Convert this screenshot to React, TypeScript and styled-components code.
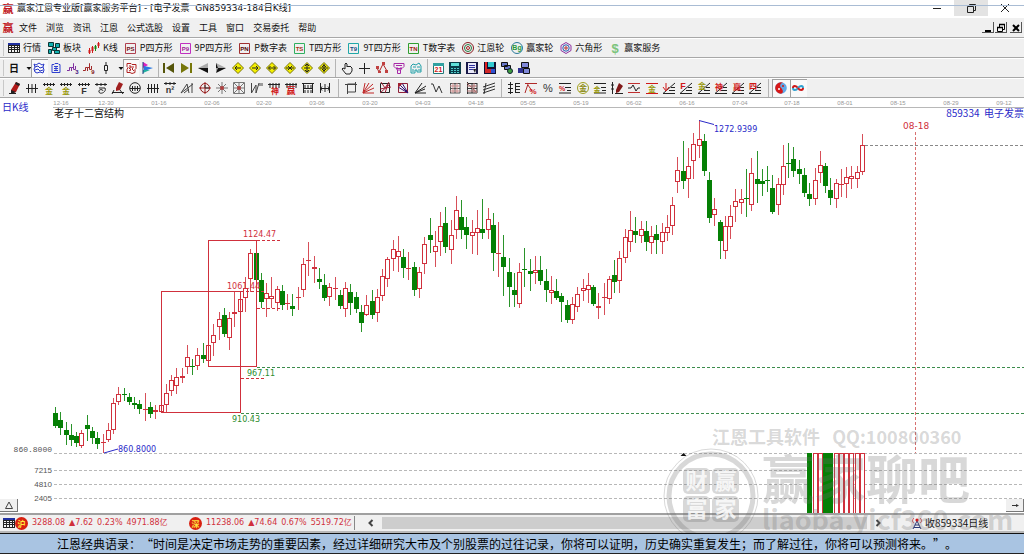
import React from 'react';
import styled, { createGlobalStyle, css } from 'styled-components';

const CJK = '"Noto Sans CJK SC", sans-serif';
const NUM = '"DejaVu Sans", "Noto Sans CJK SC", sans-serif';
const RED = '#d0303c';
const GREEN = '#058005';
const BLUE = '#2a2ac8';

const GlobalStyle = createGlobalStyle`
  * { box-sizing: border-box; }
  body { margin: 0; background: #fff; font-family: ${CJK}; font-size: 9px; color: #111; }
  button { margin: 0; padding: 0; border: 0; background: none; font: inherit; color: inherit; }
`;

/* ---------- icons ---------- */

type Shape = { d: string; s?: string; f?: string; w?: number };
type Label = { t: string; x?: number; y?: number; c: string; size?: number; bold?: boolean };
type IconSpec = { shapes?: Shape[]; labels?: Label[] };

const K = '#222';
const R = '#d01818';
const s = (d: string, c = K, w = 1): Shape => ({ d, s: c, w });
const f = (d: string, c = K): Shape => ({ d, f: c });
const t = (text: string, c: string, x = 6, y = 10, size = 8, bold = true): Label => ({ t: text, c, x, y, size, bold });

const badge = (text: string, frame: string, ink: string): IconSpec => ({
  shapes: [s('M0.500 1.500h10v10h-10z', frame)],
  labels: [t(text, ink, 5.5, 9, 6)],
});
const diamond = (marks: string): IconSpec => ({
  shapes: [{ d: 'M6 0.500l5.500 5.500-5.500 5.500-5.500-5.500z', f: '#f4f000', s: '#77720a', w: 1 }, s(marks, K, 1)],
});
const ringPath = (r: number, cx = 6, cy = 6) => `M${cx - r} ${cy}a${r} ${r} 0 1 0 ${2 * r} 0a${r} ${r} 0 1 0 ${-2 * r} 0`;
const fan = 'M0 11.500h12M0 11.500L12 1M6 8.500h6M8 5.500h4';

const ICONS: Record<string, IconSpec> = {
  seal: { labels: [t('赢', '#c01420', 6, 10, 11)] },
  quotes: { shapes: [f('M0 1h12v10H0z', '#222'), f('M0 1h12v2H0z', '#2030a0'), f('M1 4h2v1H1zM4 4h2v1H4zM7 4h2v1H7zM10 4h1v1h-1zM1 6h2v1H1zM4 6h2v1H4zM7 6h2v1H7zM10 6h1v1h-1zM1 8h2v2H1zM4 8h2v2H4zM7 8h2v2H7zM10 8h1v2h-1z', '#f4f4f4')] },
  blocks: { shapes: [{ d: 'M0.5 0.5h5v4h-5zM7.500 1.500h4v4h-4zM4.500 5.500h4v3h-4zM0.500 7.500h3v4h-3zM6.500 8.500h5v3h-5z', f: '#10b0b0', s: '#0b3434' }] },
  kline: { shapes: [s('M1.500 6v6M4.500 4v7', R), s('M7.500 3v6', '#118811'), s('M10.500 0v6', R), f('M0.500 8h2v3h-2zM3.500 5h2v4h-2zM9.500 1h2v3h-2z', R), f('M6.500 4h2v3h-2z', '#118811')] },
  p8: badge('PS', '#b04050', '#701018'),
  p9: badge('P9', '#c030c0', '#a01898'),
  pn: badge('PN', '#a03030', '#500808'),
  t8: badge('TS', '#30b060', '#a83018'),
  t9: badge('T9', '#20a8a8', '#184880'),
  tn: badge('TN', '#30a030', '#a02010'),
  wheel: { shapes: [s(ringPath(5.5), '#8a1c22', 1), s(ringPath(3.5), '#207840', 1), s(ringPath(1.5), '#a02020', 1)] },
  wheel2: { shapes: [s(ringPath(5.5), '#2a7a9a', 1)], labels: [t('Bg', '#2a9a3a', 6, 8, 7)] },
  hexa: { shapes: [s('M6 0.500l5 3v5l-5 3-5-3v-5z', '#9030a0'), s(ringPath(3.2), '#2858b0'), s(ringPath(1.2), '#b02020')] },
  dollar: { labels: [t('$', '#7cc47c', 6, 11, 13)] },
  net: { shapes: [s('M1 2l2 1 3-2 3 2 2-1-1 3 1 3-1 3-3-1-3 1-2-1-1-3 1-2zM2 5l3-1 2 2 3-1M2 8l3-1 2 2 3-1', '#2838c8')] },
  scroll: { shapes: [s('M2 2.500h2l1-1h3l1 1h1v8H2zM4 4.500h4M4 6.500h4M6 4v4M4 8.500h4', '#3040d0')] },
  step3: { shapes: [s('M0 8.500h2.500V5.500h2V9M4.500 5.500h2V1.500v6h2V4', '#8030a0')], labels: [t('3', '#401080', 10, 12, 6)] },
  step9: { shapes: [s('M0 8.500h2.500V5.500h2V9M4.500 5.500h2V1.500v6h2V4', '#a02828')], labels: [t('9', '#801010', 10, 12, 6)] },
  candle: { shapes: [s('M6 0v3M6 9v3M4.500 3.500h3v5h-3z')] },
  redMaze: { shapes: [s('M2 1.500h4l1 1h4v4l-1 1v3l-3 1-2-1H2v-3l1-2-1-1zM4 4h2v2H4l2 2-2 1M8 4v2l-1 1 2 2', '#b02020', 1)] },
  flag: { shapes: [f('M1 0l5 3-5 3z', '#e020c0'), f('M2 4l9 2-9 3z', '#2878e0'), f('M1 8h7l-7 3z', '#20b0a0'), s('M1 0v12', '#204080')] },
  first: { shapes: [f('M0 1h2v10H0zM11 1v10L3 6z', '#55550a')] },
  last: { shapes: [f('M10 1h2v10h-2zM1 1v10l8-5z', '#77770a')] },
  prev: { shapes: [f('M11 1v9L1 6z', '#aaa'), f('M11 6v5L1 6z', '#111')] },
  next: { shapes: [f('M1 1v9l10-4z', '#aaa'), f('M1 6v5l10-5zM1 1l2 5-2 5z', '#111')] },
  dLeft: diamond('M3 6h6M5 4L3 6l2 2'),
  dRight: diamond('M3 6h6M7 4l2 2-2 2'),
  dBoth: diamond('M2.500 6h7M4.500 4l-2 2 2 2M7.500 4l2 2-2 2'),
  dIn: diamond('M2 6h8M4 4l2 2-2 2M8 4L6 6l2 2'),
  dUp: diamond('M6 2v8M4 4l2-2 2 2M3 6h6M4 8l2 2 2-2'),
  dDown: diamond('M6 2v8M4 5l2-2 2 2M4 7l2 2 2-2M2 6h8'),
  hand: { shapes: [s('M4 7V2l1-1 1 1v3l1-1 1 1 1-1 1 1 1 1v3l-2 3H5L1 7l1-1z')] },
  cross: { shapes: [s('M6.500 1v11M1 6.500h11')] },
  wave: { shapes: [s('M1 6l2 4 4-8 4 7', '#b02020'), f('M0 4h3v3H0zM6 0h3v3H6zM2 9h3v2H2zM9 8h3v3H9z', '#c04040')] },
  tree: { shapes: [s('M1 1.500h10v3l-2 2H3l-2-2zM4 5v3h4V5M4.500 8v3.500h3V8M3 3.500h6', '#a828a8')] },
  brain: { shapes: [s('M1 4l2-2 3 1 3-2 2 3v6H7V8H5v3H1V7zM3 5h3M7 5h3M3 7v3M8 8h3', '#20a0a8')] },
  cal: { shapes: [{ d: 'M1.500 2.500h10v9h-10z', f: '#fff', s: '#207878' }, f('M1 1h11v3H1z', '#30a0a0')], labels: [t('21', R, 6.5, 10, 7)] },
  calc: { shapes: [f('M0 0h12v12H0z', '#0a3c48'), f('M2 1h8v3H2z', '#60e0d8'), f('M2 6h2v1H2zM5 6h2v1H5zM8 6h2v1H8zM2 8h2v1H2zM5 8h2v1H5zM8 8h2v1H8zM2 10h2v1H2zM5 10h2v1H5zM8 10h2v1H8z', '#50c8c8')] },
  note: { shapes: [f('M0 0h12v12H0z', '#181848'), f('M2 1h8v10H2z', '#e8e8f8'), s('M3 3.500h6M3 5.500h6M3 7.500h4', '#3030a0'), f('M7 7h3l-1 4z', '#222')] },
  save: { shapes: [f('M0 0h12v12H0z', '#101030'), f('M1 0h2v7H1z', '#e02020'), f('M4 0h6v5H4z', '#30c8d0'), f('M1 7h6v4H1z', '#d02828'), f('M7 7h4v4H7z', '#3050d0')] },
  pcs: { shapes: [{ d: 'M0.500 0.500h6v4h-6zM3.500 3.500h6v4h-6z', f: '#6878c8', s: '#111' }, { d: ringPath(2.5, 9, 9), f: '#40a040', s: '#123' }] },
  pcs2: { shapes: [{ d: 'M3.500 0.500h7v5h-7zM5.500 6.500h6v5h-6z', f: '#8088d8', s: '#111' }, f('M0 6h5v5H0z', '#303090')] },
  pencil: { shapes: [f('M2 8L7 0l4 2-4 8-5 2z', '#b01818'), f('M2 8l5 2-5 2zM7 0l4 2-1 2-4-2z', '#222'), s('M0 11.500h7')] },
  ticks: { shapes: [s('M0 6.500h12M2.500 2v9M6 2v9M9.500 2v9')] },
  goldTicks: { shapes: [s('M0 2.500h12M1.500 1v3M4.500 1v3M7.500 1v3M10.500 1v3')], labels: [t('金', '#98980a', 6, 12, 8)] },
  fTicks: { shapes: [s('M0 2.500h12M1.500 1v3M4.500 1v3M7.500 1v3M10.500 1v3')], labels: [t('F', '#333', 6, 12, 9)] },
  curl: { shapes: [s('M0 2.500h12M2 1v3M6 1v3M10 1v3M4 6h6c2 4-5 7-6 4s4-3 4-1')] },
  pencil2: { shapes: [f('M4 6l3-6 4 2-3 6-4 1z', '#a02020'), s('M0 10.500h12M2 8l-2 4M8 8l3 4')] },
  ovalH: { shapes: [s(ringPath(5.3)), s('M1 6.500h10M3.500 4v5M6 4v5M8.500 4v5', K, 1)] },
  ticks4: { shapes: [s('M0 6.500h12M1.500 2v9M4.500 2v9M7.500 2v9M10.500 2v9')] },
  n2: { shapes: [s('M0 1.500h12M2 0v3M6 0v3M10 0v3')], labels: [t('n²', '#333', 6, 11, 9)] },
  angle: { shapes: [s('M0 11L6 2l2 9M0 11l12-9M11 1v10M3 11l5-4', '#444')] },
  redTarget: { shapes: [s(ringPath(4.5), '#901818'), s('M6 0v12M0 6h12', '#a02020'), s('M6 3v3h4', '#333')] },
  burst: { shapes: [s('M6 0v12M0 6h12M2 2l8 8M10 2l-8 8', '#777'), f(ringPath(2), '#b04040')] },
  burstBox: { shapes: [s('M0.500 0.500h11v11h-11zM6 0v12M0 6h12M1 1l10 10M11 1L1 11', '#777'), f(ringPath(2), '#b04040')] },
  vee: { shapes: [s('M1.500 1v10L6 3v8L9 1M10 1v3M12 1v3', '#444')] },
  ruler1: { shapes: [s('M0 2.500h12M2 1v5M5 1v5M8 1v5M11 1v5')], labels: [t('神', R, 7, 12, 8)] },
  ruler2: { shapes: [s('M0 2.500h12M2 1v5M5 1v5M8 1v5M11 1v5')], labels: [t('赢', R, 6, 12, 9)] },
  film: { shapes: [s('M0 1.500h12M1.500 1v10M10.500 1v10M1 6.500h10M3 3v3M6 3v3M9 3v3M3 8v3M6 8v3M9 8v3')] },
  span: { shapes: [s('M1.500 1v10M10.500 1v10M6 2v8M1 6.500h10M3 4.500L1.500 6.500 3 8.500M9 4.500l1.500 2-1.500 2')] },
  frame: { shapes: [s('M2.500 2v8h8V2zM0 2.500h12M2.500 10v2M10.500 0v2', '#444')] },
  redFan: { shapes: [s('M1 11L3 1M1 11L7 1M1 11l10-9M1 11l11-5M1 11h11', '#c02828')] },
  boxFan: { shapes: [s('M1.500 1.500h9v9h-9z', '#222'), s('M6 6L2 0M6 6l4-6M1 11L11 2M1 7l11-2M6 11l3-9', '#a02038')] },
  boxFan2: { shapes: [s('M1.500 1.500h9v9h-9z', '#902038'), s('M1 1l10 10M1 5l10 6M5 1l6 10', '#301070'), f('M1 1h5L1 6z', '#a02030')] },
  blackFan: { shapes: [s('M1 11L8 1M1 11l11-7M1 11h11M1 11l10-4')] },
  zig: { shapes: [s('M0 2h2l3 8 3-6 3 7', '#333')] },
  gridRed: { shapes: [s('M1 1.500h10M1 6.500h10M1 11h10M1.500 1v10M6 1v10M11 1v10', '#555'), s('M1 4h10M1 9h10M4 1v10M8 1v10', '#d09090')] },
  gridRed2: { shapes: [s('M1 1.500h10M1 6.500h10M1 11h10M1.500 0v12M6 1v10M11 1v10', '#333'), s('M1 4h10M1 9h10M1 1l10 10M8 1v10', '#b07070')] },
  channels: { shapes: [s('M0 5l12-4M0 8l12-4M0 11l12-4M3 1L1 12', '#333')] },
  ladder: { shapes: [s('M2.500 0v12M0 2.500h5M0 6.500h5M0 10.500h5', '#222'), s('M7 1.500h5M7 4.500h5M7 7.500h5M7 10.500h5M7.500 1v10', '#222')] },
  pctTop: { shapes: [s('M0 1.500h12M3 2L0 11M3 3l4 6', '#b02828')], labels: [t('%', R, 8, 12, 8)] },
  pct: { labels: [t('%', '#333', 6, 10, 11, false)] },
  pctLines: { shapes: [s('M0 1.500h12M6 5.500h6M0 11h12M8 8.500h4')], labels: [t('%', R, 3, 9, 7)] },
  goldRing: { shapes: [s(ringPath(5.500), '#a0a020')], labels: [t('金', '#8c8c10', 6, 9, 8)] },
  goldLines: { shapes: [s('M0 1.500h12M7 5.500h5M0 11h12M8 8.500h4')], labels: [t('金', '#98980a', 3, 10, 7)] },
  penRule: { shapes: [s('M1.500 0v12M0 3h3M0 7h3M4 11.500h8'), f('M5 8l3-7 4 3-4 6-3 1z', '#801818')] },
  band: { shapes: [s('M0 1.500h12M0 10.500h12', '#c03030'), s('M0 6h3l2-3 3 6 2-3h2')] },
  goldBand: { shapes: [s('M0 1.500h12M0 11.500h12', R)], labels: [t('金', '#98980a', 6, 10, 8)] },
  anchor: { shapes: [s(fan), s('M3 1v7M0 5l3 4 3-4', R)] },
  fanF: { shapes: [s(fan)], labels: [t('F', R, 3, 7, 9)] },
  fanGold: { shapes: [s(fan)], labels: [t('金', '#98980a', 4, 7, 8)] },
  fanShen: { shapes: [s(fan)], labels: [t('神', R, 4, 8, 8)] },
  fanYing: { shapes: [s(fan)], labels: [t('赢', R, 5, 8, 8)] },
  fanSi: { shapes: [s(fan)], labels: [t('四', R, 4, 7, 8)] },
  taiji: { shapes: [f(ringPath(5.800), '#60a8e8'), f('M6 0.200a5.800 5.800 0 0 0 0 11.600c3-1 2-4 0-6s0-5 2-5z', '#d81818'), f(ringPath(1, 8, 4), '#d81818'), f(ringPath(1, 4, 7), '#fff')] },
  infinity: { shapes: [s('M6 6C4 3 1 3.500 1 6', R, 2), s('M1 6c0 2.500 3 3 5 0', '#30a0d0', 2), s('M6 6c2-3 5-2.500 5 0', '#30a0d0', 2), s('M11 6c0 2.500-3 3-5 0', R, 2)] },
  antenna: { shapes: [s('M6 4L2 12M6 4l4 8M4 8h4M3 10.500h6', '#283878'), s('M3 1C1 3 1 5 3 6M9 1c2 2 2 4 0 5', '#d04040'), f(ringPath(1.600, 6, 3), R)] },
  min: { shapes: [s('M2 6.500h8')] },
  restore: { shapes: [s('M2.500 4.500h6v6h-6zM4.500 4V2.500h6v6H9')] },
  close: { shapes: [s('M2 2l8 8M10 2l-8 8')] },
  mdiMin: { shapes: [s('M3 9h6', '#000', 2)] },
  mdiRestore: { shapes: [s('M2.500 5.500h5v4h-5zM4.500 5V2.500h5v5H8', '#000'), s('M2 5.500h6M4 2.500h6', '#000', 1.5)] },
  mdiClose: { shapes: [s('M3 3l6 6M9 3l-6 6', '#000', 2)] },
  left: { shapes: [s('M7.500 3L4.500 6l3 3', '#444', 2)] },
  right: { shapes: [s('M4.500 3l3 3-3 3', '#444', 2)] },
  up: { shapes: [s('M6 3L2.500 9.500h7z', '#444')] },
  arrow: { shapes: [s('M3 6.500h6', '#333'), f('M7 5l3 1.500L7 8z', '#333')] },
  caret: { shapes: [f('M3.500 5h5L6 8z', '#111')] },
  day: { labels: [t('日', '#111', 6, 10, 10)] },
};

const IconSvg = styled.svg`
  display: block;
  flex: none;
  width: 12px;
  height: 12px;
  overflow: visible;
`;

const Icon = ({ name }: { name: string }) => (
  <IconSvg viewBox="0 0 12 12" aria-hidden="true">
    {ICONS[name].shapes?.map((p, i) => (
      <path key={i} d={p.d} fill={p.f ?? 'none'} stroke={p.s ?? 'none'} strokeWidth={p.w ?? 1} />
    ))}
    {ICONS[name].labels?.map((l, i) => (
      <text key={i} x={l.x} y={l.y} fill={l.c} fontSize={l.size} textAnchor="middle" fontWeight={l.bold ? 700 : 400} fontFamily={'"Liberation Sans", "Noto Sans CJK SC", sans-serif'}>
        {l.t}
      </text>
    ))}
  </IconSvg>
);

/* ---------- window frame ---------- */

const Window = styled.div`
  display: flex;
  flex-direction: column;
  min-height: 100vh;
  background: #fff;
`;

const TitleBar = styled.header`
  position: relative;
  display: flex;
  align-items: flex-start;
  height: 18px;
  padding: 0 2px;
  background: #fff;
  &::after {
    content: '';
    position: absolute;
    top: 5px;
    left: 0;
    right: 0;
    height: 1px;
    background: #a9bcd4;
  }
`;

const TitleIcon = styled.span`
  padding-top: 3px;
`;

const TitleText = styled.h1`
  flex: 1;
  margin: 0 0 0 3px;
  font: 400 9px/17px ${NUM};
  white-space: pre;
`;

const CaptionButton = styled.button<{ $on?: boolean }>`
  display: grid;
  place-items: center;
  width: 34px;
  height: 16px;
  background: ${(p) => (p.$on ? '#e3e3e3' : 'transparent')};
`;

const bar = css`
  display: flex;
  align-items: center;
  background: #f0f0f0;
  border-bottom: 1px solid #a8a8a8;
`;

const MenuBar = styled.nav`
  ${bar}
  height: 20px;
  gap: 5px;
  padding: 0 2px;
  line-height: 18px;
`;

const MenuItems = styled.div`
  display: flex;
  gap: 9px;
`;

const MdiButtons = styled.div`
  display: flex;
  gap: 1px;
  margin-left: auto;
`;

const MdiButton = styled.button`
  display: grid;
  place-items: center;
  width: 12px;
  height: 11px;
  background: #f0f0f0;
  border-right: 1px solid #555;
  border-bottom: 1px solid #555;
  &:last-child { margin-left: 2px; }
`;

const Toolbar = styled.div`
  ${bar}
  height: 20px;
  padding-left: 3px;
  border-top: 1px solid #fff;
`;

const Grip = styled.span`
  flex: none;
  width: 3px;
  height: 16px;
  border-left: 1px solid #c8c8c8;
`;

const Divider = styled.span<{ $w: number }>`
  flex: none;
  width: ${(p) => p.$w}px;
  height: 18px;
  background: linear-gradient(#b4b4b4, #b4b4b4) center / 1px 100% no-repeat;
`;

const NamedTool = styled.button`
  display: flex;
  align-items: center;
  gap: 3px;
  line-height: 18px;
  white-space: nowrap;
`;

const NamedTools = styled.div`
  display: flex;
  gap: 7px;
  padding-left: 2px;
`;

const ToolGroup = styled.div<{ $w: number }>`
  display: flex;
  flex: none;
  width: ${(p) => p.$w}px;
`;

const ToolButton = styled.button<{ $on?: boolean; $narrow?: boolean }>`
  display: grid;
  place-items: center;
  flex: ${(p) => (p.$narrow ? '0 0 8px' : '1 1 0')};
  min-width: 0;
  height: 18px;
  ${(p) =>
    p.$on &&
    css`
      background: #f9f9f9;
      box-shadow: inset 1px 1px 0 #a0a0a0;
    `}
`;

const Tools = ({ names, w, on = [] }: { names: string[]; w: number; on?: string[] }) => (
  <ToolGroup $w={w}>
    {names.map((n, i) => (
      <ToolButton key={i} type="button" aria-label={n} $on={on.includes(n)} $narrow={n === 'caret'}>
        <Icon name={n} />
      </ToolButton>
    ))}
  </ToolGroup>
);

const MENU = ['文件', '浏览', '资讯', '江恩', '公式选股', '设置', '工具', '窗口', '交易委托', '帮助'];

const NAMED: [string, string][] = [
  ['quotes', '行情'], ['blocks', '板块'], ['kline', 'K线'], ['p8', 'P四方形'], ['p9', '9P四方形'],
  ['pn', 'P数字表'], ['t8', 'T四方形'], ['t9', '9T四方形'], ['tn', 'T数字表'], ['wheel', '江恩轮'],
  ['wheel2', '赢家轮'], ['hexa', '六角形'], ['dollar', '赢家服务'],
];

const VIEW_A = ['day', 'caret', 'net', 'scroll', 'step3', 'step9', 'candle', 'caret', 'redMaze', 'flag'];
const VIEW_B = ['first', 'last', 'prev', 'next', 'dLeft', 'dRight', 'dBoth', 'dIn', 'dUp', 'dDown'];
const VIEW_C = ['hand', 'cross', 'wave', 'tree', 'brain'];
const VIEW_D = ['cal', 'calc', 'note', 'save', 'pcs', 'pcs2'];

const DRAW_A = ['pencil', 'ticks', 'goldTicks', 'goldTicks', 'fTicks', 'curl', 'pencil2', 'ovalH', 'ticks4', 'n2', 'angle', 'redTarget', 'burst', 'burstBox', 'vee', 'ruler1', 'ruler2', 'film', 'span'];
const DRAW_B = ['frame', 'redFan', 'boxFan', 'boxFan2', 'blackFan', 'zig', 'gridRed', 'gridRed2', 'channels'];
const DRAW_C = ['ladder', 'pctTop', 'pct', 'pctLines', 'goldRing', 'goldLines', 'penRule', 'band', 'goldBand', 'anchor', 'fanF', 'fanGold', 'fanShen', 'fanYing', 'fanSi'];

/* ---------- chart ---------- */

// Each candle: [high, body top, body bottom, low, rising]
type Candle = [number, number, number, number, 0 | 1];
const CANDLES: Candle[] = [
  [407,413,426,428,0],[412,420,428,435,0],[422,430,435,445,0],[424,435,440,446,0],[432,436,443,447,0],[430,433,446,448,1],
  [415,425,429,441,0],[427,431,438,444,0],[432,438,444,449,0],[434,442,443,453,1],[423,430,440,442,1],[398,403,430,434,1],
  [387,394,402,405,1],[388,394,394,401,0],[393,397,402,405,0],[397,403,405,409,0],[400,404,409,414,0],[393,409,409,421,1],
  [402,407,414,418,0],[405,410,412,419,1],[403,405,412,412,1],[384,393,405,412,1],[375,380,391,396,1],[368,377,386,394,1],
  [368,376,378,383,1],[345,357,367,374,1],[359,366,367,375,0],[348,355,366,370,1],[343,355,359,363,0],[344,345,361,365,1],
  [324,335,343,356,1],[312,319,327,340,1],[308,315,334,337,0],[312,318,338,350,1],[292,312,314,327,1],[292,299,312,312,1],
  [277,288,298,312,1],[249,253,279,292,1],[241,253,280,283,0],[273,280,302,308,0],[283,293,299,317,1],[277,296,299,308,1],
  [286,289,303,311,1],[285,291,305,310,0],[294,303,303,310,1],[294,306,309,316,0],[287,297,297,310,1],[258,264,290,297,1],
  [242,260,260,276,1],[256,267,269,283,1],[268,279,282,289,0],[274,285,298,301,0],[283,287,297,306,1],[277,288,288,300,1],
  [290,295,306,309,0],[282,288,309,317,1],[284,292,303,315,0],[292,297,309,313,0],[305,312,323,332,0],[295,305,315,316,1],
  [290,301,315,319,0],[289,297,313,322,1],[269,276,296,301,1],[257,259,279,287,1],[240,249,259,271,1],[236,251,257,272,1],
  [249,257,268,278,0],[252,268,268,280,1],[262,267,290,296,0],[267,272,289,298,1],[237,244,264,274,1],[218,235,240,253,0],
  [231,246,252,267,1],[212,226,242,256,1],[207,223,247,253,0],[220,235,250,264,1],[196,210,230,239,1],[200,217,230,239,0],
  [217,227,235,249,0],[220,232,236,254,1],[210,228,233,255,1],[199,229,233,239,0],[208,219,230,239,1],[213,225,253,271,0],
  [222,253,254,277,1],[235,257,267,296,0],[258,272,287,307,0],[273,290,295,307,0],[263,272,304,308,1],[248,269,269,287,0],
  [259,271,274,291,0],[256,270,273,284,1],[256,270,281,285,0],[269,281,290,302,0],[276,290,293,304,1],[279,291,298,300,0],
  [293,296,302,322,0],[300,305,320,323,0],[297,304,320,324,1],[287,294,307,312,1],[279,288,291,301,1],[273,285,290,303,1],
  [285,287,304,306,0],[293,306,308,319,1],[283,297,297,315,1],[276,279,299,304,1],[260,275,282,293,0],[251,258,281,293,1],
  [229,237,258,263,1],[211,230,242,252,1],[217,231,235,243,0],[221,229,236,243,1],[221,231,242,251,0],[226,236,243,254,1],
  [225,234,240,254,0],[223,232,242,254,1],[215,227,233,241,1],[197,205,226,235,1],[157,170,182,193,1],[141,171,181,189,0],
  [148,166,179,198,1],[133,144,161,179,1],[120,139,146,158,1],[134,141,171,176,0],[172,180,218,223,0],[198,209,215,226,1],
  [220,222,241,259,0],[216,226,251,259,1],[205,216,227,239,1],[189,201,207,222,1],[189,199,203,214,1],[169,198,198,217,0],
  [158,173,205,211,1],[151,179,184,203,0],[169,181,184,196,0],[166,180,180,192,0],[175,188,212,214,0],[178,184,205,215,1],
  [145,166,185,195,1],[143,163,163,178,0],[147,159,171,177,0],[160,169,174,184,0],[168,175,193,197,0],[183,194,199,206,0],
  [168,180,199,205,1],[151,165,173,183,1],[163,166,186,193,0],[178,190,198,205,0],[179,183,199,208,1],[169,184,184,197,1],
  [167,177,184,198,1],[166,176,179,189,1],[166,172,179,188,1],[134,145,172,175,1],
];
const FIRST_X = 55.6;
const STEP = 5.274;
const VOLUME_FROM = 143;
const candleX = (i: number) => Math.floor(FIRST_X + STEP * i) + 0.5;

const DATES = ['12-16', '12-30', '01-16', '02-06', '02-20', '03-06', '03-20', '04-03', '04-18', '05-05', '05-19', '06-02', '06-16', '07-04', '07-18', '08-01', '08-15', '08-29', '09-12'];
const dateX = (i: number) => (i === 0 ? 61 : Math.round(106 + (i - 1) * 52.8));

const ChartArea = styled.main`
  position: relative;
  flex: 1;
`;

// The drawing's vertical origin sits at the top of the date axis.
const ChartSvg = styled.svg`
  display: block;
  width: 100%;
  height: auto;
  font-family: ${NUM};
`;

const CornerButton = styled.button<{ $side: 'left' | 'right' }>`
  position: absolute;
  bottom: 1px;
  ${(p) => p.$side}: 0;
  display: grid;
  place-items: center;
  width: 18px;
  height: 13px;
  background: #f0f0f0;
  border-right: 1px solid #777;
  border-bottom: 1px solid #777;
`;

const Dash = ({ x1, x2 = 1024, y, c }: { x1: number; x2?: number; y: number; c: string }) => (
  <line x1={x1} x2={x2} y1={y + 0.5} y2={y + 0.5} stroke={c} strokeDasharray="3 2" />
);

const Chart = () => (
  <ChartSvg viewBox="0 98 1024 415" role="img" aria-label="电子发票 日K线">
    <line x1="53" x2="1024" y1="107.5" y2="107.5" stroke="#b8b8b8" />
    {DATES.map((d, i) => (
      <text key={d} x={dateX(i)} y="105" fontSize="6" fill="#999" textAnchor="middle" fontFamily="Liberation Sans">{d}</text>
    ))}
    <text x="2" y="111" fontSize="10" fill={BLUE} fontFamily={CJK}>日K线</text>
    <text x="54" y="117" fontSize="10" fill="#111" fontFamily={CJK}>老子十二宫结构</text>
    <text x="1024" y="117" fontSize="10" fill={BLUE} textAnchor="end" fontFamily={CJK}>859334&nbsp; 电子发票</text>

    <Dash x1={257} y={367} c="#3c8c4c" />
    <Dash x1={241} y={413} c="#3c8c4c" />
    {[453, 470, 484, 498].map((y) => <Dash key={y} x1={54} y={y} c="#b8b8b8" />)}
    <Dash x1={865} y={145} c="#888" />
    <line x1="915.5" x2="915.5" y1="132" y2="453" stroke="#d87070" strokeDasharray="3 2" />

    {CANDLES.map(([hi, top, bot, lo, up], i) => {
      const x = candleX(i);
      const c = up ? RED : GREEN;
      return (
        <g key={i} stroke={c} strokeWidth="1">
          <path d={`M${x} ${hi}V${top}M${x} ${bot}V${lo}`} strokeOpacity="0.85" />
          {bot - top < 2
            ? <path d={`M${x - 2.5} ${top + 0.5}h5`} />
            : <rect x={x - 2} y={top + 0.5} width="4" height={bot - top - 1} fill={up ? '#fff' : GREEN} />}
        </g>
      );
    })}
    {CANDLES.slice(VOLUME_FROM).map(([, , , , up], i) => (
      <rect key={i} x={candleX(VOLUME_FROM + i) - 2} y="453.5" width="4" height="60" fill={up ? '#fff' : GREEN} stroke={up ? RED : GREEN} />
    ))}

    <g fill="none" stroke={RED}>
      <rect x="161.5" y="291.5" width="79" height="121" />
      <rect x="208.5" y="240.5" width="48" height="126" />
    </g>
    <Dash x1={257} x2={282} y={240} c={RED} />
    <Dash x1={241} x2={266} y={291} c={RED} />
    <Dash x1={257} x2={282} y={308} c={RED} />
    <Dash x1={241} x2={266} y={378} c={RED} />
    <path d="M699 120.500l15 4M104 453l14-4" fill="none" stroke={BLUE} />
    <path d="M680.500 456l3-3 3 3z" fill="#111" />

    <g fontSize="8">
      <text x="243" y="237" fill={RED}>1124.47</text>
      <text x="227" y="289" fill={RED}>1061.44</text>
      <text x="247" y="376" fill="#2c8c2c">967.11</text>
      <text x="232" y="422" fill="#2c8c2c">910.43</text>
      <text x="714" y="132" fill={BLUE}>1272.9399</text>
      <text x="118" y="452" fill={BLUE}>860.8000</text>
      <text x="903" y="129" fontSize="9" fill={RED}>08-18</text>
      <g fill="#555" textAnchor="end" fontFamily="Liberation Sans">
        <text x="52" y="452" fontFamily="Liberation Mono">860.8000</text>
        <text x="52" y="473">7215</text>
        <text x="52" y="487">4810</text>
        <text x="52" y="501">2405</text>
      </g>
    </g>
  </ChartSvg>
);

/* ---------- watermark ---------- */

const Watermark = styled.div`
  position: absolute;
  z-index: 2;
  right: 8px;
  bottom: -20px;
  display: flex;
  align-items: flex-end;
  gap: 3px;
  height: 110px;
  overflow: hidden;
  color: rgba(110, 110, 110, 0.27);
  font-weight: 700;
  white-space: nowrap;
  pointer-events: none;
`;

const MarkSeal = styled.svg`
  flex: none;
  width: 96px;
  height: 86px;
`;

const MarkText = styled.div`
  display: flex;
  flex-direction: column;
  width: 254px;
`;

const MarkLine = styled.span<{ $size: number; $line: number; $pull?: number }>`
  margin-left: -${(p) => p.$pull ?? 0}px;
  font-size: ${(p) => p.$size}px;
  line-height: ${(p) => p.$line}px;
`;

const SEAL_CHARS: [string, number, number][] = [['财', 20, 21], ['赢', 49, 21], ['富', 20, 49], ['家', 49, 49]];

/* ---------- status and footer ---------- */

const StatusBar = styled.div`
  display: flex;
  align-items: center;
  height: 20px;
  padding: 1px 0 1px 3px;
  background: #f0f0f0;
  border-top: 2px solid #a0a0a0;
  border-bottom: 2px solid #b8b8b8;
`;

const Ticker = styled.div<{ $w: number }>`
  display: flex;
  flex: none;
  align-items: center;
  gap: 4px;
  width: ${(p) => p.$w}px;
  color: ${RED};
  font: 8px/14px ${NUM};
  white-space: nowrap;
`;

const Market = styled.span`
  flex: none;
  width: 13px;
  height: 13px;
  border-radius: 50%;
  background: #d82010;
  color: #ffe840;
  font: 700 8px/13px ${CJK};
  text-align: center;
`;

const ScrollBar = styled.div`
  display: flex;
  flex: 1;
  align-items: center;
  height: 14px;
  padding: 0 10px;
  border-left: 1px solid #888;
`;

const ScrollThumb = styled.div`
  flex: 1;
  height: 12px;
  margin: 0 5px;
  background: #cdcdcd;
`;

const Feed = styled.div`
  display: flex;
  flex: none;
  align-items: center;
  gap: 2px;
  width: 130px;
  padding-left: 17px;
  font-size: 10px;
  line-height: 14px;
`;

const Footer = styled.footer`
  padding-left: 57px;
  background: #a9c4e2;
  border-top: 1px solid #111;
  border-bottom: 1px solid #222;
  font-size: 12px;
  line-height: 19px;
  color: #000;
  white-space: nowrap;
  overflow: hidden;
  text-spacing-trim: space-all;
`;

const TICKERS: { name: string; w: number; parts: string[] }[] = [
  { name: '沪', w: 174, parts: ['3288.08', '▲7.62', '0.23%', '4971.88亿'] },
  { name: '深', w: 165, parts: ['11238.06', '▲74.64', '0.67%', '5519.72亿'] },
];

export default function App() {
  return (
    <Window>
      <GlobalStyle />
      <TitleBar>
        <TitleIcon><Icon name="seal" /></TitleIcon>
        <TitleText>{'赢家江恩专业版[赢家服务平台] - [电子发票  GN859334-184日K线]'}</TitleText>
        <CaptionButton type="button" aria-label="最小化"><Icon name="min" /></CaptionButton>
        <CaptionButton type="button" aria-label="还原" $on><Icon name="restore" /></CaptionButton>
        <CaptionButton type="button" aria-label="关闭"><Icon name="close" /></CaptionButton>
      </TitleBar>

      <MenuBar>
        <Icon name="seal" />
        <MenuItems>
          {MENU.map((m) => (
            <button key={m} type="button">{m}</button>
          ))}
        </MenuItems>
        <MdiButtons>
          <MdiButton type="button" aria-label="最小化窗口"><Icon name="mdiMin" /></MdiButton>
          <MdiButton type="button" aria-label="还原窗口"><Icon name="mdiRestore" /></MdiButton>
          <MdiButton type="button" aria-label="关闭窗口"><Icon name="mdiClose" /></MdiButton>
        </MdiButtons>
      </MenuBar>

      <Toolbar>
        <Grip />
        <NamedTools>
          {NAMED.map(([icon, label]) => (
            <NamedTool key={label} type="button"><Icon name={icon} />{label}</NamedTool>
          ))}
        </NamedTools>
      </Toolbar>

      <Toolbar>
        <Grip />
        <Tools names={VIEW_A} w={150} on={['net', 'redMaze']} />
        <Divider $w={4} />
        <Tools names={VIEW_B} w={173} />
        <Divider $w={5} />
        <Tools names={VIEW_C} w={87} />
        <Divider $w={4} />
        <Tools names={VIEW_D} w={104} />
      </Toolbar>

      <Toolbar>
        <Grip />
        <Tools names={DRAW_A} w={328} />
        <Divider $w={8} />
        <Tools names={DRAW_B} w={156} />
        <Divider $w={7} />
        <Tools names={DRAW_C} w={259} />
        <Divider $w={8} />
        <Tools names={['taiji', 'infinity']} w={35} on={['taiji', 'infinity']} />
      </Toolbar>

      <ChartArea>
        <Chart />
        <CornerButton $side="left" type="button" aria-label="展开"><Icon name="up" /></CornerButton>
        <CornerButton $side="right" type="button" aria-label="向右"><Icon name="arrow" /></CornerButton>
        <Watermark aria-hidden="true">
          <MarkSeal viewBox="0 0 96 86">
            <g fill="none" stroke="currentColor">
              <circle cx="48" cy="49" r="47" strokeWidth="1" />
              <circle cx="48" cy="49" r="42" strokeWidth="5" />
            </g>
            {SEAL_CHARS.map(([c, x, y]) => (
              <g key={c}>
                <rect x={x} y={y} width="27" height="26" rx="5" fill="currentColor" />
                <text x={x + 13.5} y={y + 21} fontSize="22" fill="#fff" fillOpacity="0.8" textAnchor="middle">{c}</text>
              </g>
            ))}
          </MarkSeal>
          <MarkText>
            <MarkLine $size={18} $line={26} $pull={50}>江恩工具软件&nbsp;&nbsp; QQ:100800360</MarkLine>
            <MarkLine $size={52} $line={56}>赢家聊吧</MarkLine>
            <MarkLine $size={27} $line={28}>liaoba.yicf360.com</MarkLine>
          </MarkText>
        </Watermark>
      </ChartArea>

      <StatusBar>
        <Icon name="quotes" />
        {TICKERS.map((k) => (
          <Ticker key={k.name} $w={k.w}>
            <Market>{k.name}</Market>
            {k.parts.map((p) => <span key={p}>{p}</span>)}
          </Ticker>
        ))}
        <ScrollBar>
          <button type="button" aria-label="向左滚动"><Icon name="left" /></button>
          <ScrollThumb />
          <button type="button" aria-label="向右滚动"><Icon name="right" /></button>
        </ScrollBar>
        <Feed><Icon name="antenna" />收859334日线</Feed>
      </StatusBar>

      <Footer>
        江恩经典语录：“时间是决定市场走势的重要因素，经过详细研究大市及个别股票的过往记录，你将可以证明，历史确实重复发生；而了解过往，你将可以预测将来。”。
      </Footer>
    </Window>
  );
}
